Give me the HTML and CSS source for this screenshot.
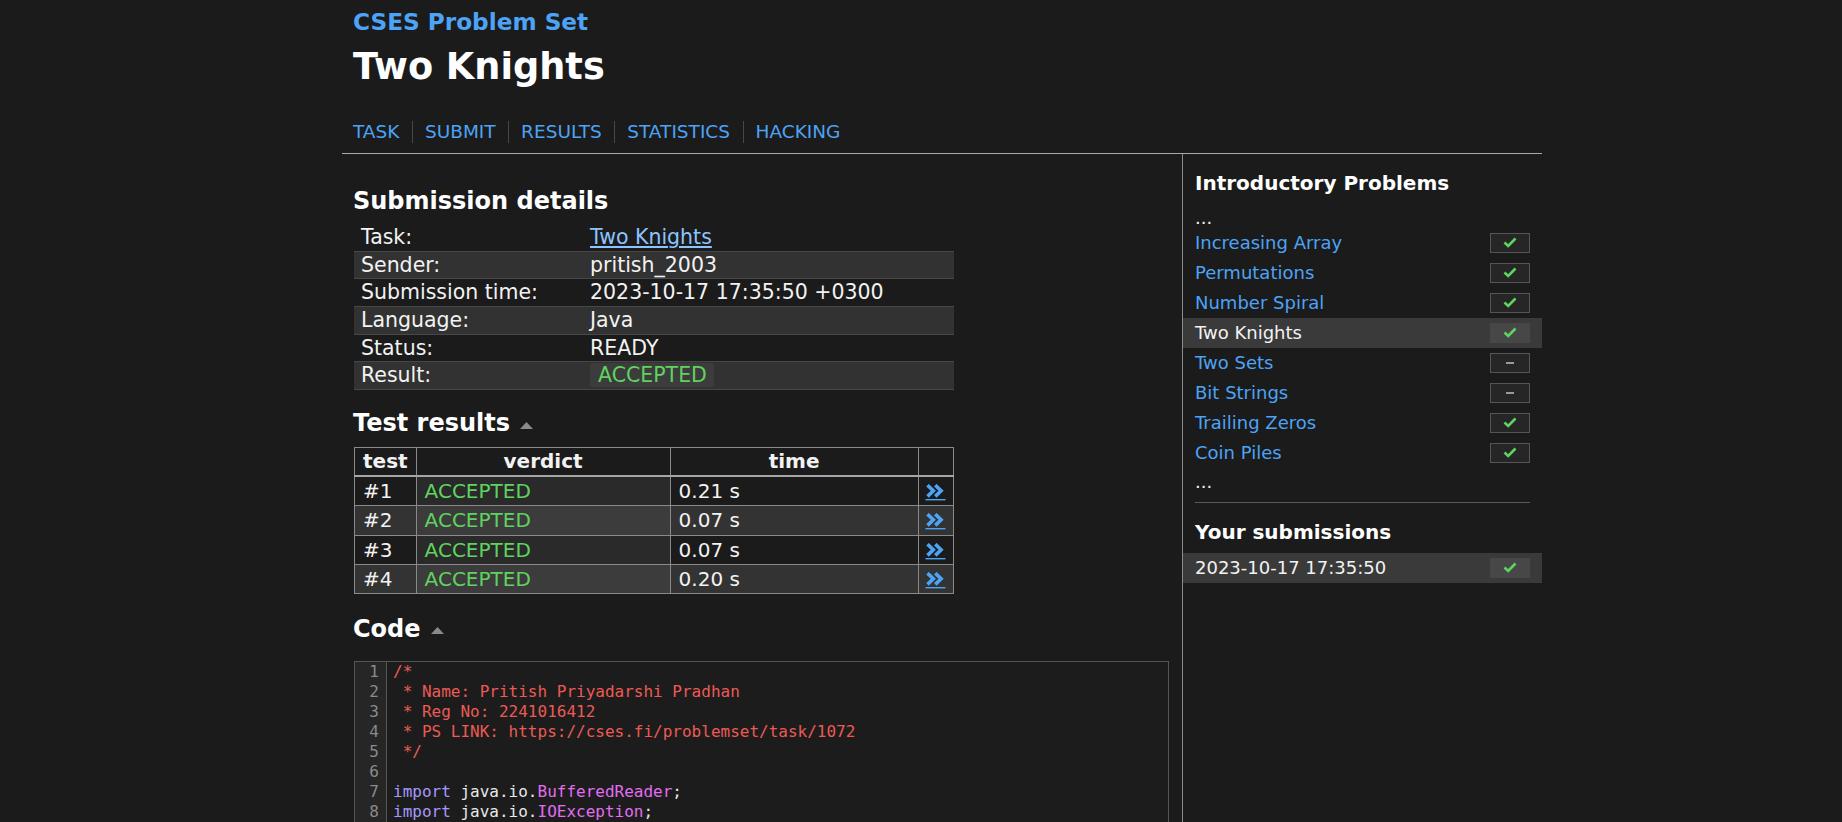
FILE: index.html
```html
<!DOCTYPE html>
<html lang="en">
<head>
<meta charset="utf-8">
<title>CSES - Two Knights - Submission</title>
<link rel="stylesheet" href="styles.css">
</head>
<body>
<div class="page">
  <header class="header">
    <div class="site-title">CSES Problem Set</div>
    <h1 class="task-title">Two Knights</h1>
    <nav class="nav">
      <a href="#">TASK</a><a href="#">SUBMIT</a><a href="#">RESULTS</a><a href="#">STATISTICS</a><a href="#">HACKING</a>
    </nav>
  </header>
  <div class="layout">
    <main class="main">
      <h2 class="section-title first">Submission details</h2>
      <table class="summary">
        <tr><td>Task:</td><td><a class="task-link" href="#">Two Knights</a></td></tr>
        <tr><td>Sender:</td><td>pritish_2003</td></tr>
        <tr><td>Submission time:</td><td>2023-10-17 17:35:50 +0300</td></tr>
        <tr><td>Language:</td><td>Java</td></tr>
        <tr><td>Status:</td><td>READY</td></tr>
        <tr><td>Result:</td><td><span class="verdict-box">ACCEPTED</span></td></tr>
      </table>

      <h2 class="section-title tests-title">Test results<svg class="toggle" width="13" height="7" viewBox="0 0 13 7"><path d="M0 7L6.5 0L13 7Z"/></svg></h2>
      <table class="tests">
        <tr><th class="c-test">test</th><th class="c-verdict">verdict</th><th class="c-time">time</th><th class="c-link"></th></tr>
        <tr><td>#1</td><td class="verdict">ACCEPTED</td><td>0.21 s</td><td class="link-cell"><svg class="more" width="22" height="17" viewBox="0 0 22 17"><path d="M2.5 1.2L8.3 6.8L2.5 12.4M10.3 1.2L16.1 6.8L10.3 12.4"/><rect x="0.5" y="15" width="20" height="1.4"/></svg></td></tr>
        <tr><td>#2</td><td class="verdict">ACCEPTED</td><td>0.07 s</td><td class="link-cell"><svg class="more" width="22" height="17" viewBox="0 0 22 17"><path d="M2.5 1.2L8.3 6.8L2.5 12.4M10.3 1.2L16.1 6.8L10.3 12.4"/><rect x="0.5" y="15" width="20" height="1.4"/></svg></td></tr>
        <tr><td>#3</td><td class="verdict">ACCEPTED</td><td>0.07 s</td><td class="link-cell"><svg class="more" width="22" height="17" viewBox="0 0 22 17"><path d="M2.5 1.2L8.3 6.8L2.5 12.4M10.3 1.2L16.1 6.8L10.3 12.4"/><rect x="0.5" y="15" width="20" height="1.4"/></svg></td></tr>
        <tr><td>#4</td><td class="verdict">ACCEPTED</td><td>0.20 s</td><td class="link-cell"><svg class="more" width="22" height="17" viewBox="0 0 22 17"><path d="M2.5 1.2L8.3 6.8L2.5 12.4M10.3 1.2L16.1 6.8L10.3 12.4"/><rect x="0.5" y="15" width="20" height="1.4"/></svg></td></tr>
      </table>

      <h2 class="section-title code-title">Code<svg class="toggle" width="13" height="7" viewBox="0 0 13 7"><path d="M0 7L6.5 0L13 7Z"/></svg></h2>
      <div class="code">
        <div class="gutter">1<br>2<br>3<br>4<br>5<br>6<br>7<br>8</div>
        <pre class="source"><span class="cm">/*
 * Name: Pritish Priyadarshi Pradhan
 * Reg No: 2241016412
 * PS LINK: https://cses.fi/problemset/task/1072
 */</span>

<span class="kw">import</span> java.io.<span class="cls">BufferedReader</span>;
<span class="kw">import</span> java.io.<span class="cls">IOException</span>;</pre>
      </div>
    </main>

    <aside class="sidebar">
      <h3 class="side-title">Introductory Problems</h3>
      <div class="dots dots-top">...</div>
      <div class="task-row"><a href="#">Increasing Array</a><span class="status"><svg class="check" width="14" height="11" viewBox="0 0 14 11"><path d="M1.5 5.5L5.2 9L12.5 1.5"/></svg></span></div>
      <div class="task-row"><a href="#">Permutations</a><span class="status"><svg class="check" width="14" height="11" viewBox="0 0 14 11"><path d="M1.5 5.5L5.2 9L12.5 1.5"/></svg></span></div>
      <div class="task-row"><a href="#">Number Spiral</a><span class="status"><svg class="check" width="14" height="11" viewBox="0 0 14 11"><path d="M1.5 5.5L5.2 9L12.5 1.5"/></svg></span></div>
      <div class="task-row current"><span class="cur-name">Two Knights</span><span class="status"><svg class="check" width="14" height="11" viewBox="0 0 14 11"><path d="M1.5 5.5L5.2 9L12.5 1.5"/></svg></span></div>
      <div class="task-row"><a href="#">Two Sets</a><span class="status"><span class="dash"></span></span></div>
      <div class="task-row"><a href="#">Bit Strings</a><span class="status"><span class="dash"></span></span></div>
      <div class="task-row"><a href="#">Trailing Zeros</a><span class="status"><svg class="check" width="14" height="11" viewBox="0 0 14 11"><path d="M1.5 5.5L5.2 9L12.5 1.5"/></svg></span></div>
      <div class="task-row"><a href="#">Coin Piles</a><span class="status"><svg class="check" width="14" height="11" viewBox="0 0 14 11"><path d="M1.5 5.5L5.2 9L12.5 1.5"/></svg></span></div>
      <div class="dots dots-bottom">...</div>
      <hr class="side-rule">
      <h3 class="side-title subs-title">Your submissions</h3>
      <div class="task-row current"><span class="cur-name">2023-10-17 17:35:50</span><span class="status"><svg class="check" width="14" height="11" viewBox="0 0 14 11"><path d="M1.5 5.5L5.2 9L12.5 1.5"/></svg></span></div>
    </aside>
  </div>
</div>
</body>
</html>
```

FILE: styles.css
```css
html, body {
  margin: 0;
  height: 822px;
  overflow: hidden;
}

body {
  background: #1b1b1b;
  color: #f2f2f2;
  font-family: "DejaVu Sans", Verdana, sans-serif;
}

a {
  color: #4da3f5;
  text-decoration: none;
}

.page {
  width: 1200px;
  margin-left: 342px;
}

/* header */
.header {
  padding: 8px 0 10px 11px;
  border-bottom: 1px solid #a8a8a8;
}

.site-title {
  font-size: 23.2px;
  font-weight: bold;
  line-height: 27px;
  color: #4da3f5;
}

.task-title {
  margin: 11.4px 0 0;
  font-size: 36.7px;
  line-height: 42px;
  color: #ffffff;
}

.nav {
  display: flex;
  margin-top: 32.4px;
  font-size: 18.5px;
  line-height: 22px;
}

.nav a {
  padding: 0 12.5px 0 12px;
  border-left: 1px solid #474747;
}

.nav a:first-child {
  padding-left: 0;
  border-left: 0;
}

/* layout */
.layout {
  display: flex;
}

.main {
  width: 829px;
  padding-left: 11px;
}

.sidebar {
  width: 335px;
  padding: 17px 12px 0;
  border-left: 1px solid #8c8c8c;
  height: 700px;
}

/* sections */
.section-title {
  margin: 0;
  font-size: 24px;
  line-height: 27px;
  color: #ffffff;
  display: flex;
  align-items: center;
}

.section-title.first {
  margin-top: 34.1px;
}

.tests-title {
  margin-top: 20.5px;
}

.code-title {
  margin-top: 22px;
}

.toggle {
  margin-left: 10px;
  margin-top: 3px;
  fill: #8a8a8a;
}

/* summary table */
.summary {
  margin: 9.4px 0 0 1px;
  width: 600px;
  border-collapse: collapse;
  font-size: 20.5px;
}

.summary td {
  padding: 0 7px;
  line-height: 26.6px;
  border-bottom: 1px solid #474747;
  white-space: nowrap;
}

.summary td:first-child {
  width: 215px;
}

.summary tr:nth-child(even) {
  background: #323232;
}

.task-link {
  color: #8cc4ff;
  text-decoration: underline;
}

.verdict-box {
  display: inline-block;
  padding: 0 7px 0 8px;
  line-height: 24px;
  color: #5fd35f;
  background: rgba(255, 255, 255, 0.05);
  border-radius: 2px;
}

/* tests table */
.tests {
  margin: 9.5px 0 0 1px;
  width: 600px;
  border-collapse: collapse;
  font-size: 20px;
  border: 1px solid #8a8a8a;
}

.tests th,
.tests td {
  border: 1px solid #8a8a8a;
  padding: 0 8px;
  text-align: left;
}

.tests th {
  line-height: 27.5px;
  border-bottom: 2px solid #a6a6a6;
  text-align: center;
}

.tests th.c-test {
  text-align: left;
  width: 41px;
}

.tests th.c-verdict {
  width: 237px;
}

.tests th.c-time {
  width: 231px;
}

.tests td {
  line-height: 28.1px;
}

.tests tr:nth-child(odd) td {
  background: #333333;
}

.tests tr:nth-child(even) td {
  background: #1b1b1b;
}

.tests td.verdict {
  color: #5fd35f;
}

.tests tr:nth-child(even) td.verdict {
  background: #2a2a2a;
}

.tests tr:nth-child(odd) td.verdict {
  background: #3c3c3c;
}

.link-cell {
  text-align: center !important;
  padding: 0 !important;
}

.more {
  vertical-align: -3px;
}

.more path {
  fill: none;
  stroke: #4da3f5;
  stroke-width: 3.6;
}

.more rect {
  fill: #4da3f5;
}

/* code */
.code {
  display: flex;
  margin: 18px 0 0 1px;
  width: 813px;
  border: 1px solid #555555;
  background: #1c1c1c;
  font-family: "DejaVu Sans Mono", "Liberation Mono", monospace;
  font-size: 16px;
  line-height: 20px;
  padding-bottom: 40px;
}

.gutter {
  width: 24px;
  padding-right: 7px;
  padding-bottom: 40px;
  margin-bottom: -40px;
  text-align: right;
  color: #8a8a8a;
  background: #262626;
  border-right: 1px solid #555555;
}

.source {
  margin: 0;
  padding-left: 6px;
  font: inherit;
  color: #e8e8e8;
}

.cm {
  color: #ec5a55;
}

.kw {
  color: #a597ff;
}

.cls {
  color: #e26df2;
}

/* sidebar */
.side-title {
  margin: 0 0 3px;
  font-size: 20px;
  line-height: 24px;
  color: #ffffff;
}

.dots {
  font-size: 18px;
  height: 30px;
  line-height: 30px;
}

.dots-top {
  line-height: 40px;
}

.dots-bottom {
  line-height: 27px;
}

.task-row {
  display: flex;
  justify-content: space-between;
  align-items: center;
  height: 30px;
  margin: 0 -12px;
  padding: 0 12px;
  font-size: 18px;
}

.task-row.current {
  background: #3a3a3a;
}

.cur-name {
  color: #f2f2f2;
}

.status {
  width: 38px;
  height: 18px;
  border: 1px solid #555555;
  background: #262626;
  display: flex;
  align-items: center;
  justify-content: center;
}

.current .status {
  border-color: transparent;
  background: #474747;
}

.check path {
  fill: none;
  stroke: #5fd35f;
  stroke-width: 2.6;
}

.dash {
  width: 8px;
  height: 2px;
  background: #9a9a9a;
}

.side-rule {
  margin: 4px 0 0;
  border: 0;
  border-top: 1px solid #5a5a5a;
}

.subs-title {
  margin: 17px 0 9px;
}
```
